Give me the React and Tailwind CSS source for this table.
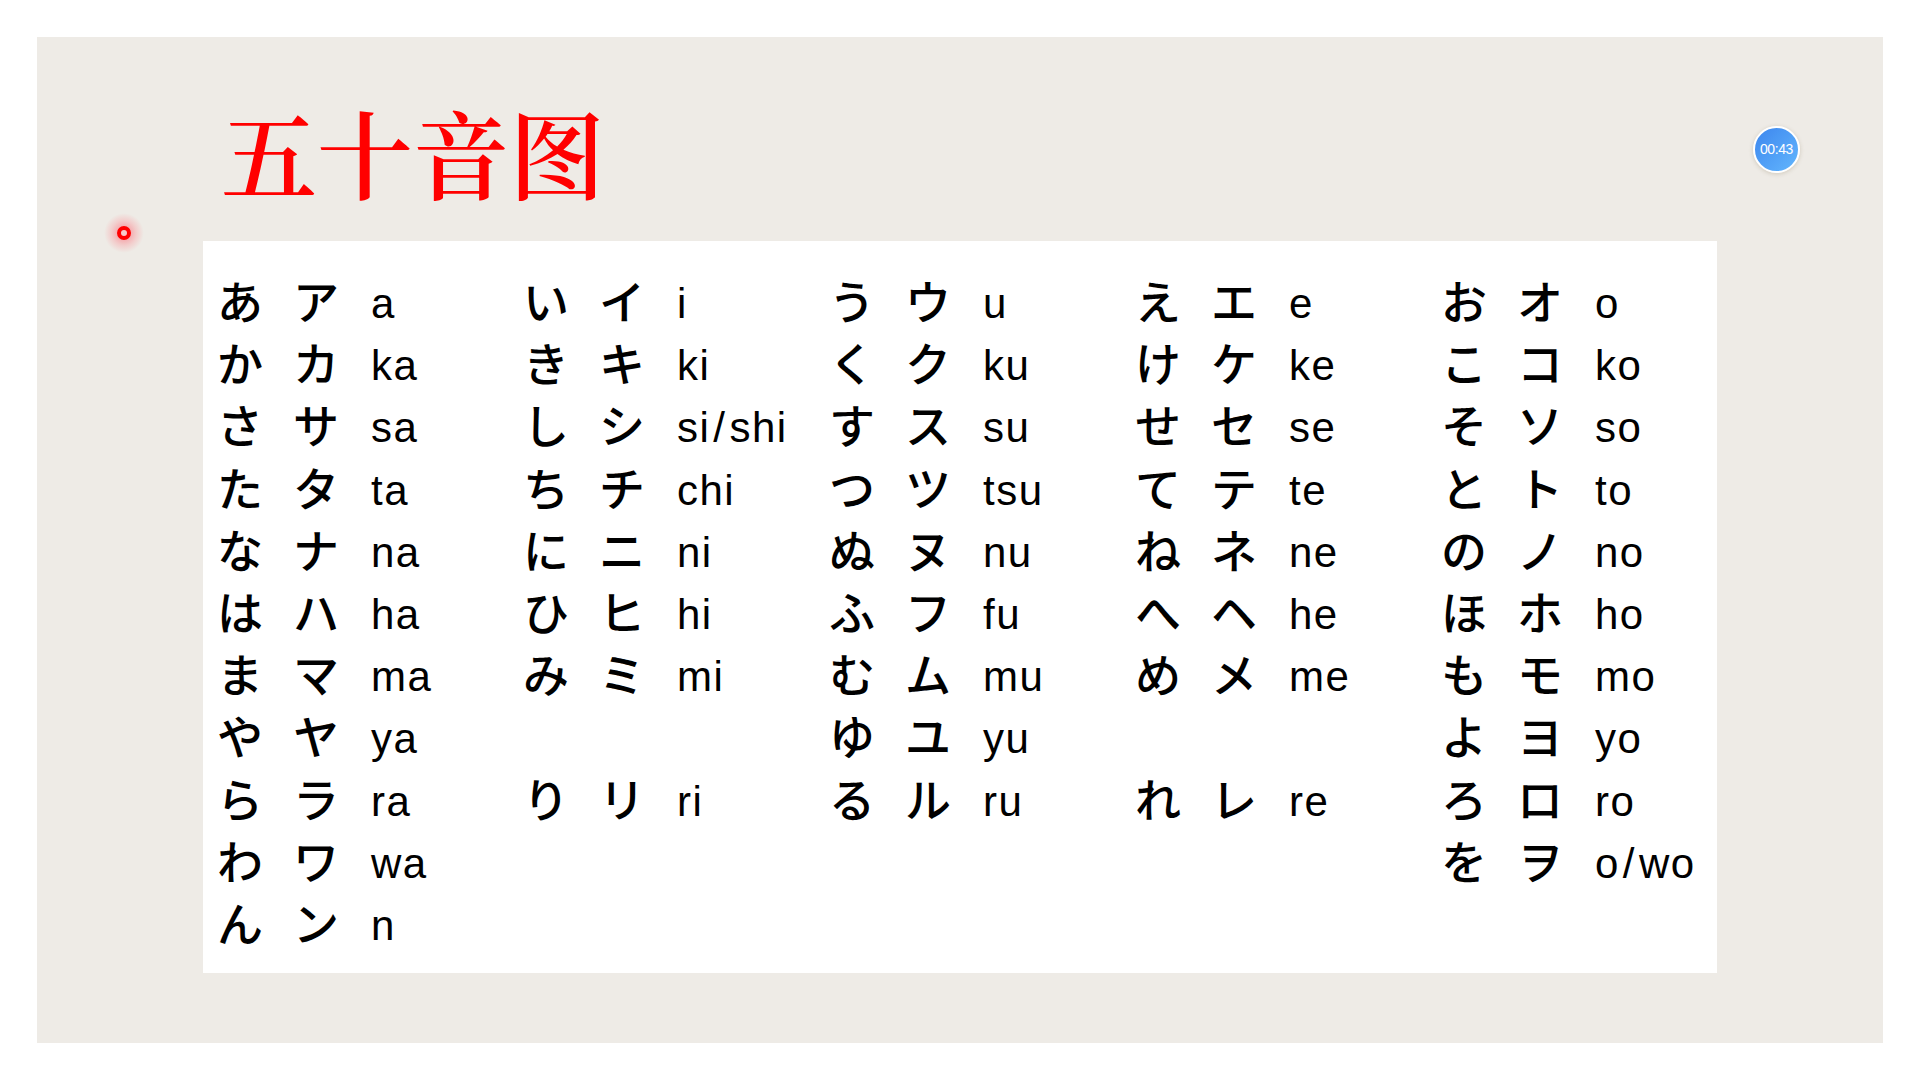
const rows = [
  [['あ', 'ア', 'a'], ['い', 'イ', 'i'], ['う', 'ウ', 'u'], ['え', 'エ', 'e'], ['お', 'オ', 'o']],
  [['か', 'カ', 'ka'], ['き', 'キ', 'ki'], ['く', 'ク', 'ku'], ['け', 'ケ', 'ke'], ['こ', 'コ', 'ko']],
  [['さ', 'サ', 'sa'], ['し', 'シ', 'si/shi'], ['す', 'ス', 'su'], ['せ', 'セ', 'se'], ['そ', 'ソ', 'so']],
  [['た', 'タ', 'ta'], ['ち', 'チ', 'chi'], ['つ', 'ツ', 'tsu'], ['て', 'テ', 'te'], ['と', 'ト', 'to']],
  [['な', 'ナ', 'na'], ['に', 'ニ', 'ni'], ['ぬ', 'ヌ', 'nu'], ['ね', 'ネ', 'ne'], ['の', 'ノ', 'no']],
  [['は', 'ハ', 'ha'], ['ひ', 'ヒ', 'hi'], ['ふ', 'フ', 'fu'], ['へ', 'ヘ', 'he'], ['ほ', 'ホ', 'ho']],
  [['ま', 'マ', 'ma'], ['み', 'ミ', 'mi'], ['む', 'ム', 'mu'], ['め', 'メ', 'me'], ['も', 'モ', 'mo']],
  [['や', 'ヤ', 'ya'], null, ['ゆ', 'ユ', 'yu'], null, ['よ', 'ヨ', 'yo']],
  [['ら', 'ラ', 'ra'], ['り', 'リ', 'ri'], ['る', 'ル', 'ru'], ['れ', 'レ', 're'], ['ろ', 'ロ', 'ro']],
  [['わ', 'ワ', 'wa'], null, null, null, ['を', 'ヲ', 'o/wo']],
  [['ん', 'ン', 'n'], null, null, null, null],
]

function Romaji({ text }) {
  // the slash in the chart is set wider than the letters
  const parts = text.split('/')
  if (parts.length === 1) return text
  return (
    <>
      {parts[0]}
      <span className="px-[3px]">/</span>
      {parts[1]}
    </>
  )
}

function Cell({ cell }) {
  if (!cell) return <div className="w-[306px] shrink-0" />
  return (
    <div className="w-[306px] shrink-0 flex items-baseline">
      <span className="w-[76px] text-[46px] font-['Noto_Sans_CJK_JP',sans-serif] font-medium">{cell[0]}</span>
      <span className="w-[78px] text-[46px] font-['Noto_Sans_CJK_JP',sans-serif] font-medium">{cell[1]}</span>
      <span className="text-[42px] font-['Liberation_Sans',Arial,sans-serif] tracking-[1.5px] translate-y-[-1px]">
        <Romaji text={cell[2]} />
      </span>
    </div>
  )
}

export default function App() {
  return (
    <div className="w-[1920px] h-[1080px] bg-white pt-[37px] pl-[37px] overflow-hidden">
      <div className="relative w-[1846px] h-[1006px] bg-[#eeebe6]">
        {/* title */}
        <div className="pl-[184px] pt-[66px]">
          <h1 className="text-[96px] leading-none text-[#ff0000] font-['Noto_Serif_CJK_SC','Noto_Sans_CJK_SC',serif] font-semibold">
            五十音图
          </h1>
        </div>

        {/* table */}
        <div className="ml-[166px] mt-[42px] w-[1514px] h-[732px] bg-white pt-[29px] pl-[14px] text-black">
          {rows.map((row, i) => (
            <div key={i} className="flex h-[62.2px] items-center leading-none">
              {row.map((cell, j) => (
                <Cell key={j} cell={cell} />
              ))}
            </div>
          ))}
        </div>

        {/* pointer dot */}
        <div className="absolute left-[67px] top-[176px] w-10 h-10 rounded-full bg-[radial-gradient(circle,rgba(255,60,80,0.55)_0%,rgba(255,120,130,0.25)_45%,rgba(255,255,255,0)_70%)] flex items-center justify-center">
          <div className="w-[14px] h-[14px] rounded-full border-[4px] border-[#ff0000] bg-[#f7c9c9]" />
        </div>

        {/* timer */}
        <div className="absolute left-[1716px] top-[89px] w-[47px] h-[47px] rounded-full border-2 border-white bg-gradient-to-br from-[#3d86ee] to-[#63b6fd] shadow-[0_1px_4px_rgba(120,100,60,0.25)] flex items-center justify-center">
          <span className="text-[14px] text-white font-['Liberation_Sans',Arial,sans-serif] tracking-[-0.4px]">00:43</span>
        </div>
      </div>
    </div>
  )
}
